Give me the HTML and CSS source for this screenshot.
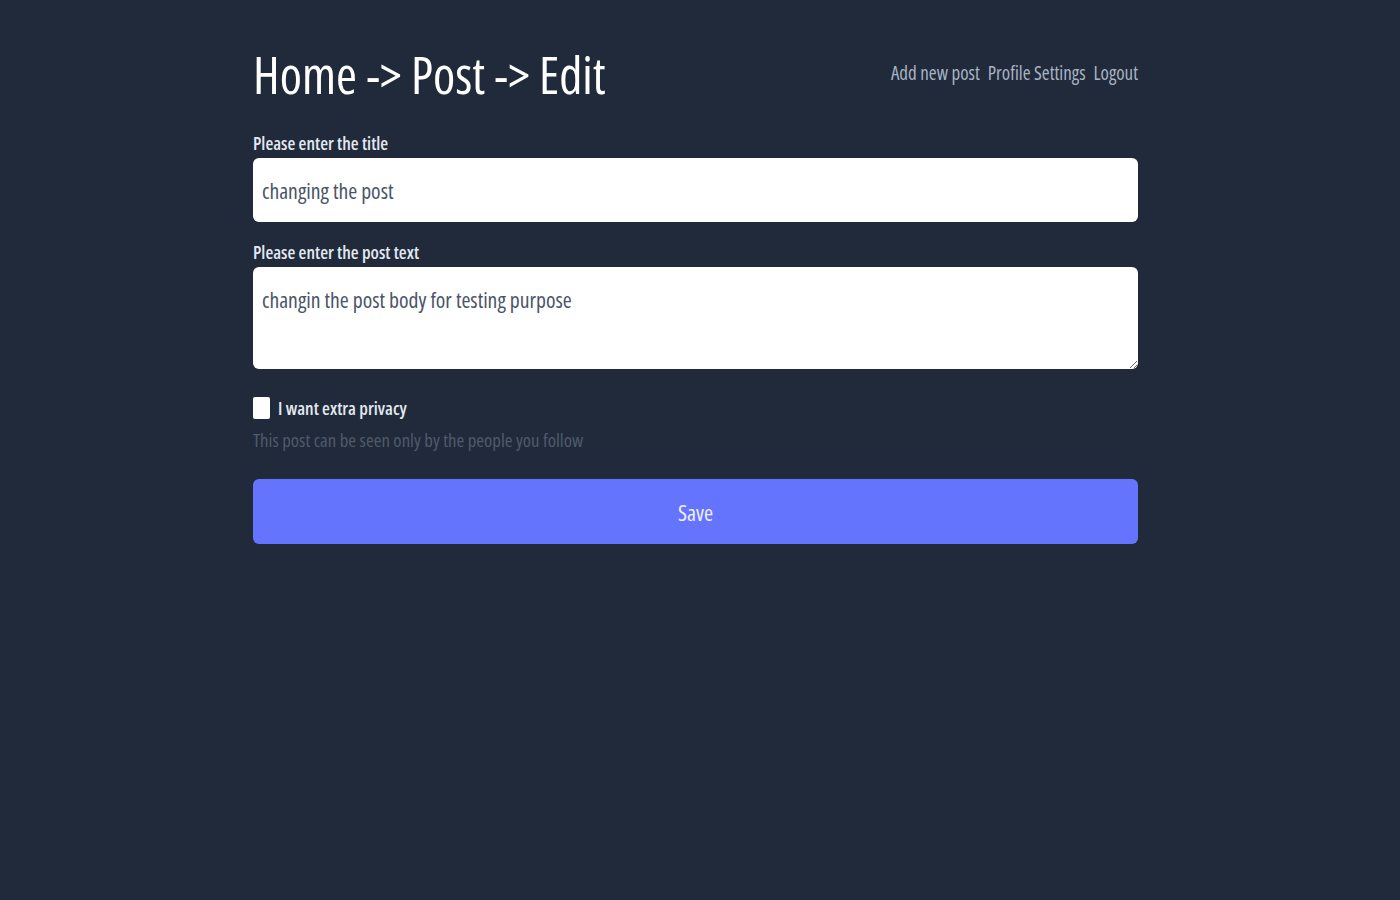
FILE: index.html
```html
<!DOCTYPE html>
<html lang="en">
<head>
<meta charset="utf-8">
<title>Edit post</title>
<link rel="stylesheet" href="styles.css">
</head>
<body>
<div class="page">
  <header class="header">
    <h1 class="crumbs">Home -&gt; Post -&gt; Edit</h1>
    <nav class="nav">
      <a href="#">Add new post</a>
      <a href="#">Profile Settings</a>
      <a href="#">Logout</a>
    </nav>
  </header>
  <form class="form">
    <label class="label" for="title">Please enter the title</label>
    <input class="field" id="title" type="text" value="changing the post">
    <label class="label label-2" for="body">Please enter the post text</label>
    <textarea class="field area" id="body">changin the post body for testing purpose</textarea>
    <div class="check-row">
      <input class="check" type="checkbox" id="priv">
      <label class="check-label" for="priv">I want extra privacy</label>
    </div>
    <p class="help">This post can be seen only by the people you follow</p>
    <button class="save" type="button">Save</button>
  </form>
</div>
</body>
</html>
```
FILE: styles.css
```css
html, body {
  margin: 0;
  padding: 0;
  background: #202a3a;
  height: 100%;
}
body {
  font-family: "Open Sans", "Liberation Sans", sans-serif;
  font-stretch: 75%;
}
.page {
  width: 885px;
  margin-left: 253px;
  padding-top: 40px;
}
.header {
  display: flex;
  justify-content: space-between;
  align-items: flex-start;
}
.crumbs {
  margin: 0;
  font-weight: 400;
  font-size: 50.5px;
  line-height: 70px;
  color: #ffffff;
  font-stretch: 75%;
}
.nav {
  display: flex;
  gap: 8px;
  padding-top: 19px;
}
.nav a {
  color: #a8b3c4;
  text-decoration: none;
  font-size: 19px;
  line-height: 28px;
}
.form {
  display: flex;
  flex-direction: column;
  margin-top: 20px;
}
.label {
  color: #e2e8f0;
  font-weight: 600;
  font-size: 18px;
  line-height: 26px;
  margin-bottom: 2px;
}
.label-2 {
  margin-top: 17px;
}
.field {
  box-sizing: border-box;
  width: 100%;
  height: 64px;
  border: none;
  border-radius: 6px;
  background: #ffffff;
  padding: 0 9px;
  font-family: inherit;
  font-stretch: 75%;
  font-size: 21.7px;
  color: #4a5568;
  outline: none;
}
.area {
  height: 102px;
  padding-top: 18px;
  resize: vertical;
  line-height: 30px;
  display: block;
}
.check-row {
  display: flex;
  align-items: center;
  gap: 8px;
  margin-top: 27px;
}
.check {
  margin: 0;
  width: 17px;
  height: 22px;
  appearance: none;
  background: #ffffff;
  border-radius: 2px;
}
.check-label {
  color: #e2e8f0;
  font-weight: 600;
  font-size: 18px;
}
.help {
  margin: 7px 0 0;
  color: #4f5a6c;
  font-size: 18.8px;
}
.save {
  margin-top: 26px;
  height: 65px;
  border: none;
  border-radius: 6px;
  background: #6574fc;
  color: #eef0ff;
  font-family: inherit;
  font-stretch: 75%;
  font-size: 22px;
  cursor: pointer;
}
```
